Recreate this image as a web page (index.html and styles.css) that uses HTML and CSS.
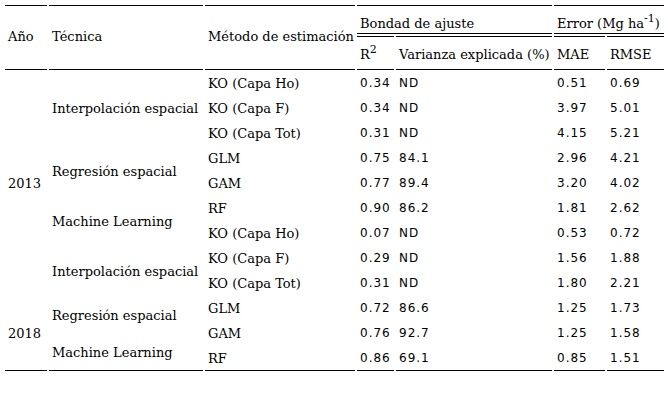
FILE: index.html
```html
<!DOCTYPE html>
<html lang="es">
<head>
<meta charset="utf-8">
<title>Resultados</title>
<link rel="stylesheet" href="styles.css">
</head>
<body>
<table class="results">
  <colgroup>
    <col class="col-year"><col class="col-tech"><col class="col-method"><col class="col-r2"><col class="col-var"><col class="col-mae"><col class="col-rmse">
  </colgroup>
  <thead>
    <tr class="head-top">
      <th rowspan="2" class="h-span">Año</th>
      <th rowspan="2" class="h-span">Técnica</th>
      <th rowspan="2" class="h-span">Método de estimación</th>
      <th colspan="2" class="h-group">Bondad de ajuste</th>
      <th colspan="2" class="h-group">Error (Mg ha<sup>-1</sup>)</th>
    </tr>
    <tr class="head-sub">
      <th>R<sup>2</sup></th>
      <th>Varianza explicada (%)</th>
      <th>MAE</th>
      <th>RMSE</th>
    </tr>
  </thead>
  <tbody>
    <tr>
      <td rowspan="9" class="year">2013</td>
      <td rowspan="12" class="tech edge">
        <div class="tech-grid">
          <span class="tech-label t-a">Interpolación espacial</span>
          <span class="tech-label t-b">Regresión espacial</span>
          <span class="tech-label t-c">Machine Learning</span>
          <span class="tech-label t-d">Interpolación espacial</span>
          <span class="tech-label t-e">Regresión espacial</span>
          <span class="tech-label t-f">Machine Learning</span>
        </div>
      </td>
      <td class="method">KO (Capa Ho)</td><td class="num">0.34</td><td class="num">ND</td><td class="num">0.51</td><td class="num">0.69</td>
    </tr>
    <tr><td class="method">KO (Capa F)</td><td class="num">0.34</td><td class="num">ND</td><td class="num">3.97</td><td class="num">5.01</td></tr>
    <tr><td class="method">KO (Capa Tot)</td><td class="num">0.31</td><td class="num">ND</td><td class="num">4.15</td><td class="num">5.21</td></tr>
    <tr><td class="method">GLM</td><td class="num">0.75</td><td class="num">84.1</td><td class="num">2.96</td><td class="num">4.21</td></tr>
    <tr><td class="method">GAM</td><td class="num">0.77</td><td class="num">89.4</td><td class="num">3.20</td><td class="num">4.02</td></tr>
    <tr><td class="method">RF</td><td class="num">0.90</td><td class="num">86.2</td><td class="num">1.81</td><td class="num">2.62</td></tr>
    <tr><td class="method">KO (Capa Ho)</td><td class="num">0.07</td><td class="num">ND</td><td class="num">0.53</td><td class="num">0.72</td></tr>
    <tr><td class="method">KO (Capa F)</td><td class="num">0.29</td><td class="num">ND</td><td class="num">1.56</td><td class="num">1.88</td></tr>
    <tr><td class="method">KO (Capa Tot)</td><td class="num">0.31</td><td class="num">ND</td><td class="num">1.80</td><td class="num">2.21</td></tr>
    <tr>
      <td rowspan="3" class="year edge">2018</td>
      <td class="method">GLM</td><td class="num">0.72</td><td class="num">86.6</td><td class="num">1.25</td><td class="num">1.73</td>
    </tr>
    <tr><td class="method">GAM</td><td class="num">0.76</td><td class="num">92.7</td><td class="num">1.25</td><td class="num">1.58</td></tr>
    <tr class="last"><td class="method">RF</td><td class="num">0.86</td><td class="num">69.1</td><td class="num">0.85</td><td class="num">1.51</td></tr>
  </tbody>
</table>
</body>
</html>
```
FILE: styles.css
```css
html, body {
  background: #ffffff;
}
body {
  margin: 0;
  padding: 3px 0 0 3px;
  color: #000000;
  font-family: "DejaVu Serif", "Liberation Serif", serif;
  font-size: 13px;
  line-height: 15px;
}
.results {
  table-layout: fixed;
  width: 663px;
  border-collapse: separate;
  border-spacing: 2px;
}
.col-year { width: 42px; }
.col-tech { width: 154px; }
.col-method { width: 150px; }
.col-r2 { width: 37px; }
.col-var { width: 156px; }
.col-mae { width: 51px; }
.col-rmse { width: 57px; }

.results th,
.results td {
  box-sizing: border-box;
  padding: 0 3px;
  text-align: left;
  font-weight: normal;
  white-space: nowrap;
}
.results th {
  border-top: 1px solid #000;
  border-bottom: 1px solid #000;
}
.head-top th { height: 29px; vertical-align: bottom; padding-bottom: 2px; }
.head-top .h-span { vertical-align: middle; padding-top: 0; padding-bottom: 2px; }
.head-sub th { height: 34px; vertical-align: middle; padding-top: 2px; }

sup {
  font-size: 11px;
  line-height: 0;
  vertical-align: 6px;
}

.results td {
  height: 23px;
  vertical-align: middle;
}
.results td.num {
  font-family: "DejaVu Sans", "Liberation Sans", sans-serif;
  font-size: 12px;
  letter-spacing: 1px;
}
.results td.tech {
  padding: 0;
  vertical-align: top;
}
.results td.edge,
.last td {
  border-bottom: 1px solid #000;
}
.last td { height: 24px; }

.tech-grid {
  display: grid;
  grid-template-columns: 1fr;
  grid-template-rows: repeat(12, 23px);
  row-gap: 2px;
  padding: 0 3px;
}
.tech-label { grid-column: 1; align-self: center; }
.t-a { grid-row: 1 / 4; }
.t-b { grid-row: 4 / 6; }
.t-c { grid-row: 6 / 8; }
.t-d { grid-row: 8 / 10; }
.t-e { grid-row: 10 / 12; align-self: start; margin-top: 11px; }
.t-f { grid-row: 11 / 13; align-self: end; margin-bottom: 10px; }
```
